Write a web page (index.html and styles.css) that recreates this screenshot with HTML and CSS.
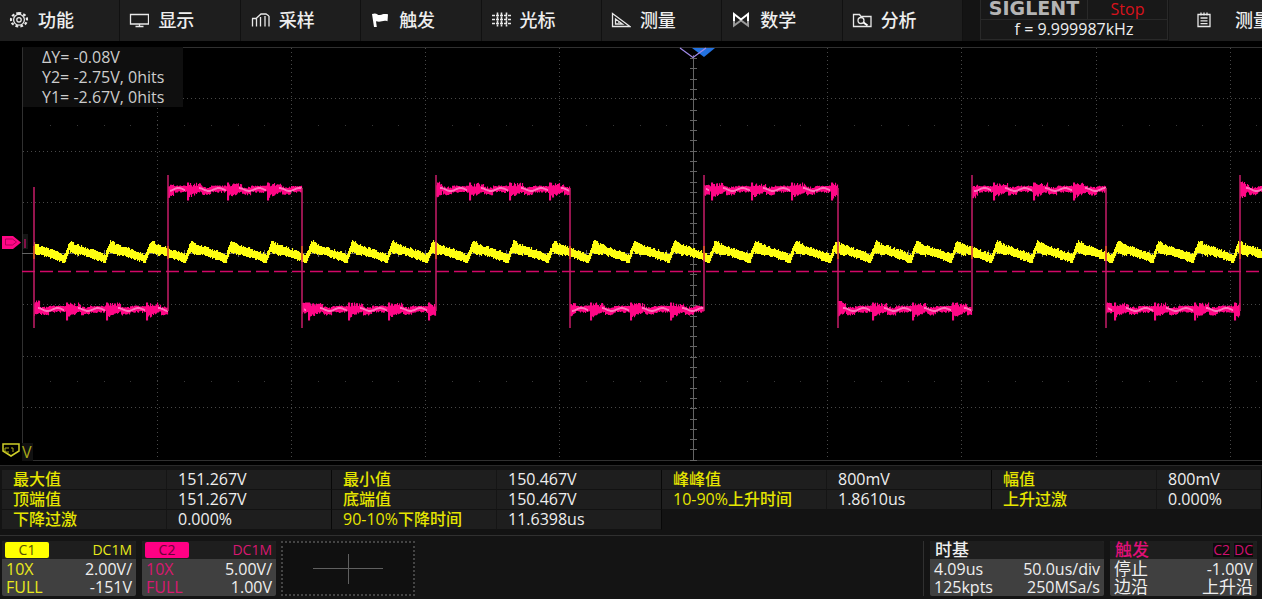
FILE: index.html
```html
<!DOCTYPE html>
<html lang="zh-CN">
<head>
<meta charset="utf-8">
<title>SIGLENT</title>
<link rel="stylesheet" href="styles.css">
</head>
<body>
<div class="scope">
  <header class="topbar">
    <nav class="menu">
      <button class="menu-item"><svg class="icon" viewBox="0 0 20 18"><path stroke-width="2.2" stroke-dasharray="2.8 2" d="M10 2.200a8 6.600 0 1 0 .01 0z"/><circle cx="10" cy="8.800" r="5.400"/><circle cx="10" cy="8.800" r="2.200"/></svg>功能</button>
      <button class="menu-item"><svg class="icon" viewBox="0 0 20 18"><path d="M1.500 3.500h18v9.500h-18zM6.500 15.500h8M10.500 13v2.500"/></svg>显示</button>
      <button class="menu-item"><svg class="icon" viewBox="0 0 20 18"><path d="M2.500 15.500V7.500M6.500 15.500V7.500M10.500 15.500V6M15 15.500V5M19 15.500V5"/><path d="M2 7.500h4l5-4.500h5l3 2"/></svg>采样</button>
      <button class="menu-item"><svg class="icon solid" viewBox="0 0 20 18"><path d="M2 3c5-2 5 1.500 8 1 3-.8 4-1.500 8-.7l-.5 7c-5-1.500-6 1.500-11.500 0l.8 5.700H4z"/></svg>触发</button>
      <button class="menu-item"><svg class="icon dashed" viewBox="0 0 20 18"><path d="M1 4.500h19M1 8.500h19M1 12.500h19M6.500 1.500v14M10.500 1.500v14M15.500 1.500v14"/></svg>光标</button>
      <button class="menu-item"><svg class="icon" viewBox="0 0 20 18"><path d="M1.500 2.500v13H19zM4.500 8v5h7zM7 11h2"/></svg>测量</button>
      <button class="menu-item"><svg class="icon" viewBox="0 0 20 18"><path class="dim" d="M3 9v5.500l7-5 7 5V9"/><path class="heavy" d="M3 10V3l7 5.500L17 3v7"/></svg>数学</button>
      <button class="menu-item"><svg class="icon" viewBox="0 0 20 18"><path d="M1.500 15.500v-12h6l1.500 2h10v10z"/><circle cx="9" cy="9.500" r="3"/><path class="heavy" d="M11.500 11.500l4 3"/></svg>分析</button>
    </nav>
    <div class="status">
      <strong class="brand">SIGLENT</strong>
      <span class="run-state">Stop</span>
      <span class="freq">f = 9.999987kHz</span>
    </div>
    <button class="side-item"><svg class="icon list" viewBox="0 0 16 18"><path d="M2 3.500h12v12H2zM5 1.500v3M8 1.500v3M11 1.500v3M4.500 7h7M4.500 9.800h7M4.500 12.600h7"/></svg>测量</button>
  </header>

  <main class="plot">
    <svg class="trace" id="trace" viewBox="0 0 1262 424" preserveAspectRatio="none"></svg>
    <dl class="cursor-box">
      <div><dt>ΔY=</dt> <dd>-0.08V</dd></div>
      <div><dt>Y2=</dt> <dd>-2.75V, 0hits</dd></div>
      <div><dt>Y1=</dt> <dd>-2.67V, 0hits</dd></div>
    </dl>
    <span class="unit">V</span>
  </main>

  <section class="measures">
    <dl class="group"><dt>最大值</dt><dd>151.267V</dd><dt>顶端值</dt><dd>151.267V</dd><dt>下降过激</dt><dd>0.000%</dd></dl>
    <dl class="group"><dt>最小值</dt><dd>150.467V</dd><dt>底端值</dt><dd>150.467V</dd><dt>90-10%下降时间</dt><dd>11.6398us</dd></dl>
    <dl class="group"><dt>峰峰值</dt><dd>800mV</dd><dt>10-90%上升时间</dt><dd>1.8610us</dd></dl>
    <dl class="group"><dt>幅值</dt><dd>800mV</dd><dt>上升过激</dt><dd>0.000%</dd></dl>
  </section>

  <footer class="bottombar">
    <button class="card channel c1">
      <span class="card-head"><span class="tag">C1</span><span class="tint">DC1M</span></span>
      <span class="card-body"><span class="row"><span class="tint">10X</span><span>2.00V/</span></span><span class="row"><span class="tint">FULL</span><span>-151V</span></span></span>
    </button>
    <button class="card channel c2">
      <span class="card-head"><span class="tag">C2</span><span class="tint">DC1M</span></span>
      <span class="card-body"><span class="row"><span class="tint">10X</span><span>5.00V/</span></span><span class="row"><span class="tint">FULL</span><span>1.00V</span></span></span>
    </button>
    <button class="add" aria-label="+"><svg class="plus" viewBox="0 0 70 30"><path d="M0 14.500h70M35.500 0v30"/></svg></button>
    <div class="spacer"></div>
    <button class="card timebase">
      <span class="card-head"><b>时基</b></span>
      <span class="card-body"><span class="row"><span>4.09us</span><span>50.0us/div</span></span><span class="row"><span>125kpts</span><span>250MSa/s</span></span></span>
    </button>
    <button class="card trigger">
      <span class="card-head"><b class="pink">触发</b><span class="source"><i>C2</i><i>DC</i></span></span>
      <span class="card-body"><span class="row"><span class="cjk">停止</span><span>-1.00V</span></span><span class="row"><span class="cjk">边沿</span><span class="cjk">上升沿</span></span></span>
    </button>
  </footer>
</div>
<script src="trace.js"></script>
</body>
</html>
```

FILE: styles.css
```css
* { box-sizing: border-box; }

body {
  margin: 0;
  background: #000;
  color: #eee;
  font: 16px/20px "Open Sans", "Noto Sans", "Noto Sans CJK SC", sans-serif;
  overflow: hidden;
}

button {
  margin: 0;
  padding: 0;
  border: 0;
  background: none;
  color: inherit;
  font: inherit;
  text-align: left;
  cursor: pointer;
}

dl, dd { margin: 0; }

.scope {
  display: flex;
  flex-direction: column;
  min-height: 100vh;
}

/* top bar */
.topbar {
  display: flex;
  height: 41px;
  overflow: hidden;
  background: #141414;
}

.menu {
  display: grid;
  grid-template-columns: repeat(8, 1fr);
  flex: 0 1 963px;
}

.menu-item,
.side-item {
  display: flex;
  align-items: center;
  background: #1e1e1e;
  font-size: 18px;
  font-weight: 500;
  white-space: nowrap;
}

.menu-item {
  gap: 9px;
  padding: 0 0 2px 9px;
  border-right: 1px solid #111;
}

.icon {
  width: 20px;
  height: 18px;
  flex: none;
  fill: none;
  stroke: #e8e8e8;
  stroke-width: 1.3;
}

.icon.solid { fill: #fff; stroke: none; }
.icon.dashed { stroke-width: 1.6; stroke-dasharray: 3 1; }
.icon .heavy { stroke: #fff; stroke-width: 2; }
.icon .dim { stroke: #999; stroke-width: 2; }
.icon.list { width: 16px; }

.status {
  display: grid;
  grid-template: 19px 20px / 107px 79px;
  flex: none;
  align-self: flex-start;
  margin-left: 17px;
  border: 1px solid #292929;
  border-top: 0;
  background: #181818;
  line-height: 18px;
  text-align: center;
}

.brand {
  border-right: 1px solid #292929;
  color: #b4b4b4;
  font: bold 19px/16px "DejaVu Sans", sans-serif;
}

.run-state { color: #d8121c; }

.freq {
  grid-column: 1 / 3;
  border-top: 1px solid #292929;
}

.side-item {
  flex: 1;
  gap: 23px;
  margin-left: 1px;
  padding: 0 0 2px 27px;
  overflow: hidden;
}

/* waveform area */
.plot {
  position: relative;
  flex: 1;
  display: flex;
}

.trace {
  display: block;
  width: 100%;
  height: 424px;
}

.cursor-box {
  position: absolute;
  left: 23px;
  top: 6px;
  width: 160px;
  padding-left: 19px;
  background: #0f0f0f;
  color: #ccc;
}

.cursor-box dt,
.cursor-box dd { display: inline; }

.unit {
  position: absolute;
  left: 22px;
  bottom: 4px;
  width: 11px;
  background: #111;
  color: #aaaa18;
  line-height: 18px;
}

.grid { stroke: #484848; stroke-dasharray: 1 3; fill: none; }
.frame { stroke: #303030; fill: none; }
.axis { stroke: #646464; fill: none; }
.hint { stroke: #383838; fill: none; }
.level { stroke: #d20868; stroke-width: 1.5; stroke-dasharray: 13 5; fill: none; }
.edge { stroke: #c61c68; stroke-width: 1.5; fill: none; }
.over { stroke: #e06020; stroke-width: 1.5; fill: none; }
.ch1 { fill: #ffff12; }
.ch2 { fill: #ff0786; }
.core { stroke: #ff8fc8; stroke-width: 2; fill: none; }

/* measurements */
.measures {
  display: grid;
  grid-template-columns: repeat(3, minmax(0, 330px)) minmax(0, 1fr);
  align-items: start;
  padding: 4px 0 5px 2px;
  border-top: 1px solid #292929;
  background: #131313;
}

.group {
  display: grid;
  grid-template-columns: 165px 1fr;
}

.group dt,
.group dd {
  height: 20px;
  padding-left: 11px;
  border-bottom: 1px solid #121212;
  border-right: 1px solid #151515;
  background: #1e1e1e;
  line-height: 18px;
  white-space: nowrap;
}

.group dt {
  color: #e6e600;
  font-weight: 500;
}

.group dd { border-right-color: #080808; }

/* bottom bar */
.bottombar {
  display: flex;
  gap: 6px;
  height: 65px;
  padding: 5px 5px 4px 2px;
  border-top: 1px solid #303030;
  background: #141414;
}

.card {
  display: flex;
  flex-direction: column;
  flex: none;
  width: 134px;
  height: 55px;
  border-radius: 2px;
  background: #404040;
  overflow: hidden;
}

.card-head {
  display: flex;
  align-items: center;
  justify-content: space-between;
  height: 18px;
  padding: 0 4px 0 3px;
  background: #1e1e1e;
  font-size: 14px;
  line-height: 18px;
}

.card-body {
  flex: 1;
  padding: 1px 4px 0;
  line-height: 18px;
}

.row {
  display: flex;
  justify-content: space-between;
  height: 18px;
}

.tag {
  width: 44px;
  height: 16px;
  border-radius: 2px;
  line-height: 16px;
  text-align: center;
}

.c1 .tint { color: #e8e81c; }
.c1 .tag { background: #ff0; color: #555000; }
.c2 .tint { color: #d81870; }
.c2 .tag { background: #ff0084; color: #6c0038; }

.add {
  display: grid;
  place-items: center;
  flex: none;
  width: 134px;
  height: 55px;
  margin-left: -1px;
  border: 2px dotted #444;
  background: #101010;
}

.plus {
  width: 70px;
  height: 30px;
  fill: none;
  stroke: #606060;
}

.spacer {
  flex: 1;
  border-right: 1px solid #303030;
}

.timebase { width: 174px; }
.trigger { width: 147px; }

.timebase .card-head,
.trigger .card-head { padding-left: 5px; }

.card b {
  font-size: 17px;
  font-weight: 500;
}

.pink { color: #e01078; }

.source {
  display: flex;
  gap: 4px;
  color: #d01070;
}

.source i {
  background: #0c0c0c;
  font-style: normal;
  line-height: 14px;
}

.cjk { font-size: 17px; }
```

FILE: trace.js
```js
const svg = document.getElementById('trace');
const TOP = 41;
const END = 1262;

function add(cls, d, extra) {
  const p = document.createElementNS('http://www.w3.org/2000/svg', 'path');
  p.setAttribute('class', cls);
  p.setAttribute('d', d);
  if (extra) p.setAttribute('style', extra);
  svg.appendChild(p);
}

/* repeatable noise */
let seed = 7;
function rnd() {
  seed = (seed * 16807) % 2147483647;
  return seed / 2147483647;
}

const y = v => v - TOP;

/* graticule */
let d = '';
[157, 291, 425, 559, 827, 961, 1096, 1230].forEach(x => { d += `M${x + 0.5} ${y(48)}V${y(460)}`; });
[98, 151, 202, 304, 356, 407].forEach(v => { d += `M23 ${y(v) + 0.5}H${END}`; });
add('grid', d);
add('frame', `M${END} 6.5H22.5V419.5H${END}`);

d = '';
[125, 381].forEach(v => {
  for (let x = 50; x < END; x += 26.8) d += `M${Math.round(x)} ${y(v) + 0.5}h1`;
});
add('hint', d);

d = `M693.5 ${y(55)}V${y(460)}M22 ${y(253) + 0.5}H${END}`;
for (let i = 0; i < 40; i++) d += `M690 ${Math.round(y(58 + i * 10.3)) + 0.5}h7`;
for (let x = 50; x < END; x += 26.8) d += `M${Math.round(x) + 0.5} ${y(250)}v7`;
add('axis', d);
add('level', `M22 ${y(271) + 0.5}H${END}`);

/* channel 2: square wave with ringing bursts */
const edges = [34, 168, 302, 436, 570, 704, 838, 972, 1106, 1240];
const burst = 40.3;
let fill = '', core = '', lines = '', cross = '';
edges.forEach((x0, i) => {
  const high = i % 2 === 1;
  const base = y(high ? 189.5 : 309.5);
  const x1 = Math.min(x0 + 134, END);
  for (let x = x0; x < x1; x++) {
    const q = (x - 25 + burst) % burst;
    let up = 3, down = 3;
    if (q < 15) {
      up = 3 + rnd() * 4;
      down = Math.max(3, 10 - q * 0.5) * (0.6 + rnd() * 0.4);
      if (q < 2) { up = 7; down = 11; }
    } else if (q < 24) {
      up = 1 + rnd() * 2;
      down = 4 + rnd() * 2;
    } else {
      up = 3 + rnd();
      down = 1.5 + rnd() * 2;
    }
    if (x - x0 < 6) {
      up += high ? 1 : 3;
      down += high ? 3 : 1;
    }
    fill += `M${x} ${(base - up).toFixed(1)}h1.1V${(base + down).toFixed(1)}h-1.1z`;
    const c = base + Math.sin((q - 17) / burst * Math.PI * 4) * 1.5;
    if (q > 12 && q < 39 && x > x0 + 1) core += `M${x} ${c.toFixed(1)}h1`;
  }
  lines += `M${x0} ${y(i === 0 ? 187 : high ? 175 : 188)}V${y(high ? 311 : 328)}`;
  cross += `M${x0} ${y(246)}V${y(259)}`;
});
add('ch2', fill);
add('core', core, 'opacity:0.8');

/* channel 1: ripple */
fill = '';
for (let x = 34; x < END; x += 1) {
  const ph = (x - 65 + 2 * burst) % burst;
  let mid;
  if (ph < 4) mid = 257 - ph * 2.6;
  else mid = 246 + (ph - 4) * 0.35;
  if (ph > 37) mid = 258.5;
  let t = 3 + rnd() * 2.4;
  let b = 3.6 + rnd() * 1.8;
  if (ph > 4.5 && ph < 9) t = 4.5 + rnd() * 2;
  if (ph > 4 && ph < 14) b += 2;
  if (ph < 3 || ph > 37) b = 4.5;
  fill += `M${x} ${Math.round(y(mid - t))}h1.1V${Math.round(y(mid + b))}h-1.1z`;
}
add('ch1', fill);
add('edge', lines);
add('over', cross);

/* channel and trigger markers */
add('m', `M2 ${y(236)}h11l8 6.5-8 6.5H2z`, 'fill:#ff0786');
add('m', `M5.5 ${y(239)}h7l4 3-4 3h-7z`, 'fill:none;stroke:#b00058');
add('m', `M23 ${y(234)}h5v15h-5z`, 'fill:#151515');
add('m', `M25 ${y(239)}v9`, 'stroke:#841048;stroke-width:2');
add('m', `M3 ${y(444)}h16v7l-8 5-8-5z`, 'fill:none;stroke:#cfcf28;stroke-width:1.5');
add('m', `M9 ${y(448)}h-4v4h4M11 ${y(448)}h2v4`, 'fill:none;stroke:#a8a818');
add('m', `M692 ${y(48)}h23l-11 9z`, 'fill:#2372e0');
add('m', `M680 ${y(48)}l13 9.5 13-9.5`, 'fill:none;stroke:#a08ae8;stroke-width:1.2');
```
